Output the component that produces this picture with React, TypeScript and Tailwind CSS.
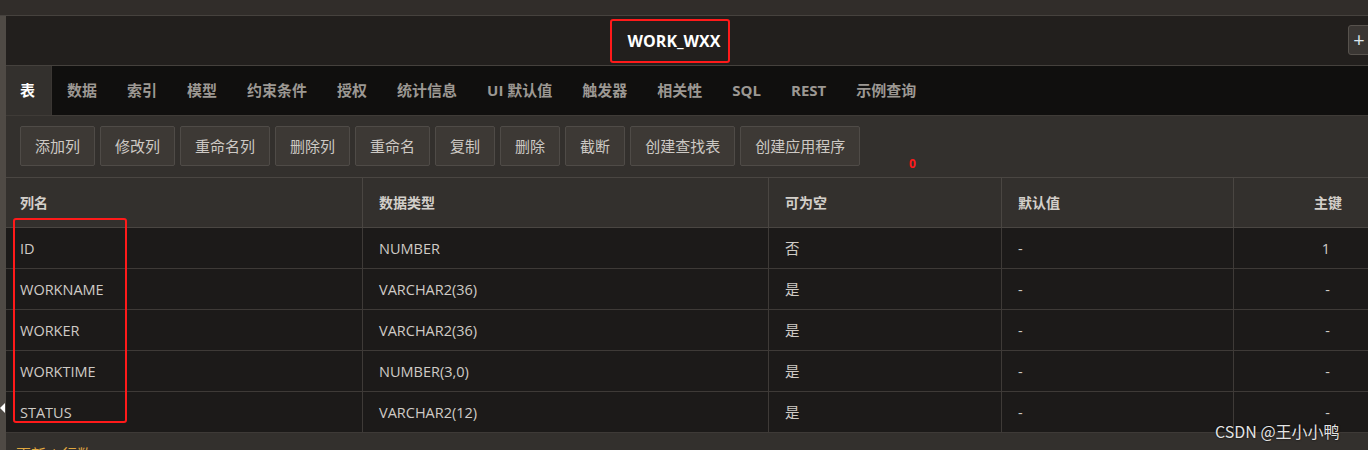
const TABS = ["表", "数据", "索引", "模型", "约束条件", "授权", "统计信息", "UI 默认值", "触发器", "相关性", "SQL", "REST", "示例查询"]

const ACTIONS = ["添加列", "修改列", "重命名列", "删除列", "重命名", "复制", "删除", "截断", "创建查找表", "创建应用程序"]

const ROWS = [
  { name: "ID", type: "NUMBER", nullable: "否", def: "-", pk: "1" },
  { name: "WORKNAME", type: "VARCHAR2(36)", nullable: "是", def: "-", pk: "-" },
  { name: "WORKER", type: "VARCHAR2(36)", nullable: "是", def: "-", pk: "-" },
  { name: "WORKTIME", type: "NUMBER(3,0)", nullable: "是", def: "-", pk: "-" },
  { name: "STATUS", type: "VARCHAR2(12)", nullable: "是", def: "-", pk: "-" },
]

const GRID = "grid grid-cols-[357px_406px_233px_232px_1fr]"

export default function App() {
  return (
    <div
      className="relative h-[450px] w-[1368px] overflow-hidden bg-[#33302d] text-[14px]"
      style={{ fontFamily: '"Open Sans", "Noto Sans CJK SC", sans-serif' }}
    >
      <div className="h-[16px] border-b border-[#46423e] bg-[#312d2a]" />
      <div className="flex">
        <div className="relative w-[6px] shrink-0 bg-[#4f4a45]">
          <div className="absolute left-0 top-[387px] h-0 w-0 border-y-[5px] border-r-[5px] border-y-transparent border-r-white" />
        </div>
        <div className="min-w-0 flex-1">
          {/* title bar */}
          <div className="relative flex h-[50px] items-center justify-center border-b border-[#45413d] bg-[#221f1d]">
            <div className="ml-[-34px] flex h-[44px] w-[120px] items-center justify-center rounded-[3px] border-2 border-[#ff1a1a] pl-[8px] text-[16px] font-bold text-white">
              WORK_WXX
            </div>
            <div className="absolute left-[1342px] top-[9px] flex h-[30px] w-[30px] items-center justify-center rounded-[3px] border border-[#57524d] bg-[#3a3633] pr-[8px] text-[20px] leading-none text-[#dde6ee]">
              +
            </div>
          </div>

          {/* tabs */}
          <div className="flex h-[50px] items-stretch border-b border-[#3f3b37] bg-[#100f0e] text-[15px]">
            {TABS.map((t, i) => (
              <div
                className={
                  i === 0
                    ? "flex items-center border-r border-[#3a3633] bg-[#33302d] pl-[14px] pr-[16px] font-bold text-white"
                    : "flex items-center px-[15px] font-bold text-[#9c9893]"
                }
                key={t}
              >
                {t}
              </div>
            ))}
          </div>

          {/* toolbar */}
          <div className="relative flex h-[62px] items-start gap-[5px] border-b border-[#4a4642] pl-[14px] pt-[10px]">
            {ACTIONS.map((a) => (
              <button
                className="h-[40px] rounded-[2px] border border-[#4f4b47] bg-[#3d3935] px-[14px] text-[15px] text-[#cdc9c4]"
                key={a}
                type="button"
              >
                {a}
              </button>
            ))}
            <span className="absolute left-[903px] top-[42px] text-[12px] font-bold leading-none text-[#ff1a1a]">0</span>
          </div>

          {/* table header */}
          <div className={`${GRID} h-[50px] border-b border-[#4a4642] bg-[#33302d] font-bold text-[#d3cfca]`}>
            <div className="flex items-center border-r border-[#4a4642] pl-[14px]">列名</div>
            <div className="flex items-center border-r border-[#4a4642] pl-[16px]">数据类型</div>
            <div className="flex items-center border-r border-[#4a4642] pl-[16px]">可为空</div>
            <div className="flex items-center border-r border-[#4a4642] pl-[16px]">默认值</div>
            <div className="flex items-center justify-end pr-[26px]">主键</div>
          </div>

          {/* rows */}
          <div className="relative bg-[#1c1a19] text-[14.5px] text-[#cfcbc6]">
            {ROWS.map((r) => (
              <div className={`${GRID} h-[41px] border-b border-[#3e3a37]`} key={r.name}>
                <div className="flex items-center border-r border-[#3e3a37] pl-[14px] pt-[2px]">{r.name}</div>
                <div className="flex items-center border-r border-[#3e3a37] pl-[16px] pt-[2px]">{r.type}</div>
                <div className="flex items-center border-r border-[#3e3a37] pl-[16px] pt-[2px]">{r.nullable}</div>
                <div className="flex items-center border-r border-[#3e3a37] pl-[16px] pt-[2px]">{r.def}</div>
                <div className="flex items-center justify-end pr-[38px] pt-[2px]">{r.pk}</div>
              </div>
            ))}
            <div className="pointer-events-none absolute left-[7px] top-[-10px] h-[205px] w-[114px] rounded-[3px] border-2 border-[#ff1a1a]" />
          </div>

          {/* footer */}
          <div className="pl-[10px] pt-[11px] text-[15px] leading-[20px] text-[#e0a840]">更新 | 行数</div>
        </div>
      </div>

      <div
        className="absolute left-[1215px] top-[419px] text-[16px] text-[#e4e4e4]"
        style={{ fontFamily: '"Noto Sans CJK SC", sans-serif', textShadow: "0 0 2px #000" }}
      >
        CSDN @王小小鸭
      </div>
    </div>
  )
}
